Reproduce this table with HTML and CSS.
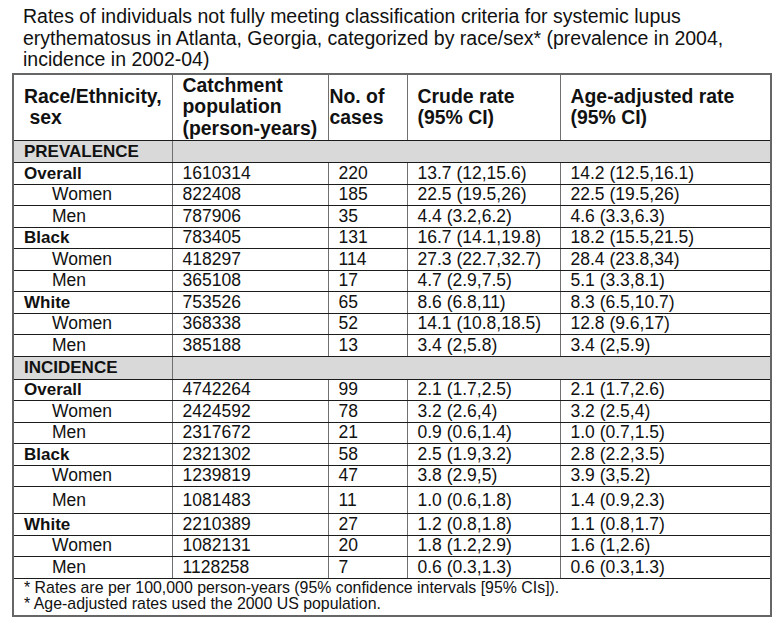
FILE: index.html
```html
<!DOCTYPE html>
<html lang="en">
<head>
<meta charset="utf-8">
<title>SLE rates table</title>
<link rel="stylesheet" href="styles.css">
</head>
<body>
<div class="page">
  <p class="caption">Rates of individuals not fully meeting classification criteria for systemic lupus<br>erythematosus in Atlanta, Georgia, categorized by race/sex* (prevalence in 2004,<br>incidence in 2002-04)</p>
  <table class="rates">
    <colgroup>
      <col class="c-group">
      <col class="c-pop">
      <col class="c-cases">
      <col class="c-crude">
      <col class="c-adj">
    </colgroup>
    <thead>
      <tr class="head">
        <th>Race/Ethnicity,<br>&nbsp;sex</th>
        <th>Catchment<br>population<br>(person-years)</th>
        <th class="tight">No. of<br>cases</th>
        <th>Crude rate<br>(95% CI)</th>
        <th>Age-adjusted rate<br>(95% CI)</th>
      </tr>
    </thead>
    <tbody>
      <tr class="section"><td class="label">PREVALENCE</td><td colspan="4"></td></tr>
      <tr><td class="label">Overall</td><td>1610314</td><td>220</td><td>13.7 (12,15.6)</td><td>14.2 (12.5,16.1)</td></tr>
      <tr><td class="sub">Women</td><td>822408</td><td>185</td><td>22.5 (19.5,26)</td><td>22.5 (19.5,26)</td></tr>
      <tr><td class="sub">Men</td><td>787906</td><td>35</td><td>4.4 (3.2,6.2)</td><td>4.6 (3.3,6.3)</td></tr>
      <tr><td class="label">Black</td><td>783405</td><td>131</td><td>16.7 (14.1,19.8)</td><td>18.2 (15.5,21.5)</td></tr>
      <tr><td class="sub">Women</td><td>418297</td><td>114</td><td>27.3 (22.7,32.7)</td><td>28.4 (23.8,34)</td></tr>
      <tr><td class="sub">Men</td><td>365108</td><td>17</td><td>4.7 (2.9,7.5)</td><td>5.1 (3.3,8.1)</td></tr>
      <tr><td class="label">White</td><td>753526</td><td>65</td><td>8.6 (6.8,11)</td><td>8.3 (6.5,10.7)</td></tr>
      <tr><td class="sub">Women</td><td>368338</td><td>52</td><td>14.1 (10.8,18.5)</td><td>12.8 (9.6,17)</td></tr>
      <tr><td class="sub">Men</td><td>385188</td><td>13</td><td>3.4 (2,5.8)</td><td>3.4 (2,5.9)</td></tr>
      <tr class="section tall"><td class="label">INCIDENCE</td><td colspan="4"></td></tr>
      <tr><td class="label">Overall</td><td>4742264</td><td>99</td><td>2.1 (1.7,2.5)</td><td>2.1 (1.7,2.6)</td></tr>
      <tr><td class="sub">Women</td><td>2424592</td><td>78</td><td>3.2 (2.6,4)</td><td>3.2 (2.5,4)</td></tr>
      <tr><td class="sub">Men</td><td>2317672</td><td>21</td><td>0.9 (0.6,1.4)</td><td>1.0 (0.7,1.5)</td></tr>
      <tr><td class="label">Black</td><td>2321302</td><td>58</td><td>2.5 (1.9,3.2)</td><td>2.8 (2.2,3.5)</td></tr>
      <tr><td class="sub">Women</td><td>1239819</td><td>47</td><td>3.8 (2.9,5)</td><td>3.9 (3,5.2)</td></tr>
      <tr class="wide"><td class="sub">Men</td><td>1081483</td><td>11</td><td>1.0 (0.6,1.8)</td><td>1.4 (0.9,2.3)</td></tr>
      <tr><td class="label">White</td><td>2210389</td><td>27</td><td>1.2 (0.8,1.8)</td><td>1.1 (0.8,1.7)</td></tr>
      <tr><td class="sub">Women</td><td>1082131</td><td>20</td><td>1.8 (1.2,2.9)</td><td>1.6 (1,2.6)</td></tr>
      <tr><td class="sub">Men</td><td>1128258</td><td>7</td><td>0.6 (0.3,1.3)</td><td>0.6 (0.3,1.3)</td></tr>
      <tr class="notes"><td colspan="5">* Rates are per 100,000 person-years (95% confidence intervals [95% CIs]).<br>* Age-adjusted rates used the 2000 US population.</td></tr>
    </tbody>
  </table>
</div>
</body>
</html>
```
FILE: styles.css
```css
html, body {
  margin: 0;
  padding: 0;
  background: #ffffff;
}

body {
  font-family: "Liberation Sans", Arial, sans-serif;
  color: #000000;
}

.page {
  padding: 6px 0 0 12px;
}

.caption {
  margin: 0 0 2px 11px;
  font-size: 19.5px;
  line-height: 21.5px;
  color: #111111;
}

.rates {
  border-collapse: collapse;
  table-layout: fixed;
  width: 758px;
  border: 2px solid #666666;
}

.c-group { width: 159px; }
.c-pop { width: 156px; }
.c-cases { width: 79px; }
.c-crude { width: 153px; }
.c-adj { width: 211px; }

.rates th,
.rates td {
  border-top: 1px solid #1c1c1c;
  border-bottom: 1px solid #1c1c1c;
  border-left: 1px solid #707070;
  border-right: 1px solid #707070;
  padding: 0 0 0 10px;
  vertical-align: middle;
  text-align: left;
  white-space: nowrap;
}

.rates td {
  font-size: 17.5px;
  line-height: 19px;
  color: #111111;
}

.rates tbody tr {
  height: 21.5px;
}

.head {
  height: 67px;
}

.rates th {
  font-size: 19.4px;
  line-height: 21.7px;
  font-weight: bold;
  color: #111111;
}

.rates th.tight {
  padding-left: 1px;
}

.rates td.label {
  font-weight: bold;
  font-size: 17px;
}

.rates td.sub {
  padding-left: 38px;
}

.rates tr.section {
  height: 22px;
}

.rates tr.section.tall {
  height: 23px;
}

.rates tr.section td {
  background: #d9d9d9;
}

.rates tr.wide {
  height: 27px;
}

.rates tr.notes {
  height: 37px;
}

.rates tr.notes td {
  font-size: 15.9px;
  line-height: 16.7px;
  padding: 1px 0 2px 10px;
  vertical-align: top;
}
```
